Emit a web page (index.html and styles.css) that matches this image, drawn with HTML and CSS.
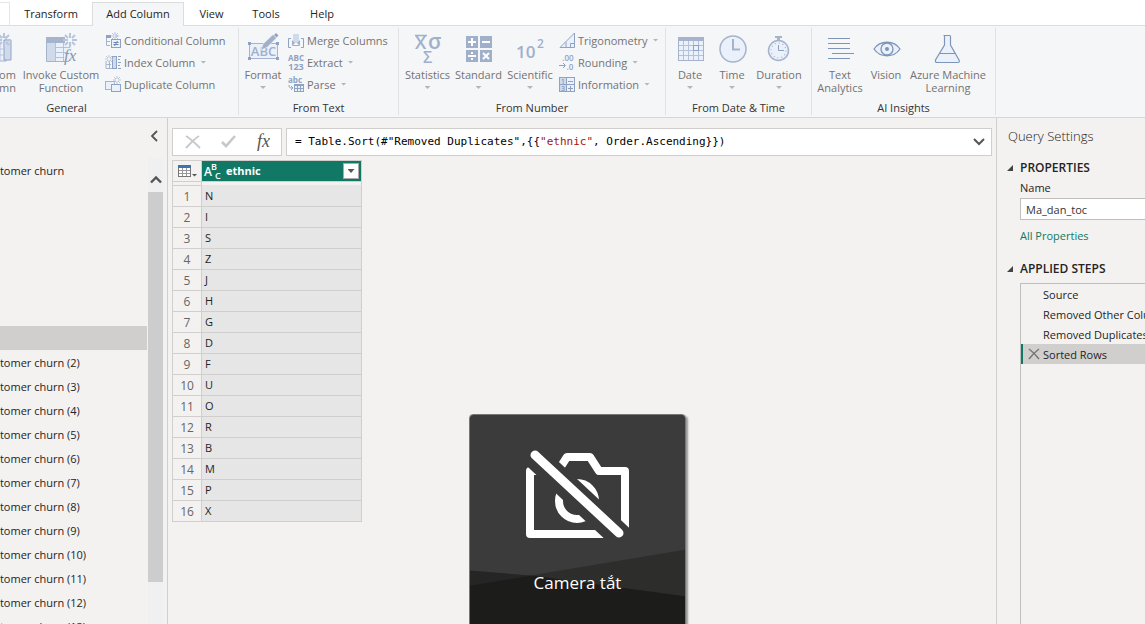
FILE: index.html
```html
<!DOCTYPE html>
<html lang="en">
<head>
<meta charset="utf-8">
<title>Power Query Editor</title>
<link rel="stylesheet" href="styles.css">
</head>
<body>
<svg class="defs" aria-hidden="true">
  <defs>
    <g id="burst" fill="none" stroke="#b9c5dc" stroke-width="2">
      <path d="M0-7V-2M0 7V2M-7 0H-2M7 0H2M-5-5L-2-2M5 5L2 2M-5 5L-2 2M5-5L2-2"/>
    </g>
    <g id="burst-s" fill="none" stroke="#b9c5dc" stroke-width="1">
      <path d="M0-4V-1M0 4V1M-4 0H-1M4 0H1M-3-3L-1-1M3 3L1 1M-3 3L-1 1M3-3L1-1"/>
    </g>
  </defs>
</svg>
<div class="app">
  <nav class="tabs">
    <button class="tab tab-file" aria-label="Home"></button>
    <button class="tab tab-transform">Transform</button>
    <button class="tab tab-active">Add Column</button>
    <button class="tab tab-view">View</button>
    <button class="tab tab-tools">Tools</button>
    <button class="tab tab-help">Help</button>
  </nav>

  <div class="ribbon">
    <section class="group group-general">
      <div class="tools">
        <button class="big w52">
          <svg class="icon" viewBox="0 0 40 34"><rect x="6" y="5" width="24" height="24" fill="#eaf1fb" stroke="#a6b3cc"/><path d="M6 5H24V10H6Z" fill="#a6b3cc"/><path d="M28 8H35V28H28Z" fill="#cfdbeb" stroke="#8fa2c3"/><path d="M20 5V29M24 10V29M10 17H28M10 23H28" stroke="#b9c5dc" fill="none"/><use href="#burst" x="28" y="8"/></svg>
          <span>Custom<br>Column</span>
        </button>
        <button class="big w78">
          <svg class="icon" viewBox="0 0 40 34"><path d="M5 5H24V11H5Z" fill="#a6b3cc"/><path d="M5.500 11V29.500H28" fill="none" stroke="#a6b3cc"/><path d="M6 11H14V29H6Z" fill="#cfdbeb"/><path d="M14 11H31V29H14Z" fill="#eaf1fb"/><path d="M14.500 11V29M22.500 11V29M15 15.500H29M15 20.500H25M15 25.500H23" stroke="#b3c1d9" fill="none"/><use href="#burst" x="29" y="8"/><text x="23" y="29" class="fx-big">fx</text></svg>
          <span>Invoke Custom<br>Function</span>
        </button>
        <div class="stack stack-general">
          <button class="small"><svg class="mini" viewBox="0 0 16 16"><path d="M1 3H6V6H1Z" fill="#8fa2c3"/><path d="M1.500 6V13.500H5M5 9.500H1M9.500 4H13" stroke="#a6b3cc" fill="none"/><use href="#burst-s" x="10" y="4"/><rect x="6.500" y="7.500" width="9" height="8" fill="#eaf1fb" stroke="#8fa2c3"/><path d="M8.500 10.500H13.500M8.500 12.500H13.500M12.500 9L9.500 14" stroke="#6f87b0" fill="none"/></svg>Conditional Column</button>
          <button class="small"><svg class="mini" viewBox="0 0 16 16"><path d="M1 7V14.500H8M1.500 10.500H6M4.500 7V14" stroke="#a6b3cc" fill="none"/><rect x="7.500" y="2.500" width="4" height="12" fill="#cfdbeb" stroke="#8fa2c3"/><use href="#burst-s" x="4" y="5"/><path d="M13 2.500H16M13 5.500H15M13 8.500H16M13 11.500H15M13 14.500H16" stroke="#8fa2c3"/></svg>Index Column<i class="caret"></i></button>
          <button class="small"><svg class="mini" viewBox="0 0 16 16"><rect x=".5" y="5.500" width="9" height="8" fill="#eaf1fb" stroke="#a6b3cc"/><rect x="6.500" y="8.500" width="9" height="7" fill="#eaf1fb" stroke="#8fa2c3"/><use href="#burst-s" x="12" y="4"/></svg>Duplicate Column</button>
        </div>
      </div>
      <h2>General</h2>
    </section>

    <section class="group group-text">
      <div class="tools">
        <button class="big w48">
          <svg class="icon" viewBox="0 0 40 34"><rect x="6.500" y="11.500" width="28" height="15" fill="#eaf1fb" stroke="#a6b3cc"/><path d="M5 10H8V13H5ZM33 10H36V13H33ZM5 25H8V28H5ZM33 25H36V28H33Z" fill="#8fa2c3"/><text x="20.500" y="23.500" class="abc-big">ABC</text><path d="M18 18L20 12L30 2.500L33.500 6L24 15.500Z" fill="#a0b0cb" stroke="#f5f6f8" stroke-width=".6"/><path d="M31 3L33 1L35.500 3.500L33.500 5.500Z" fill="#8fa2c3"/></svg>
          <span>Format</span><i class="caret"></i>
        </button>
        <div class="stack">
          <button class="small"><svg class="mini" viewBox="0 0 16 16"><path d="M3 6.500H.5V15.500H3M13 6.500H15.500V15.500H13" stroke="#8fa2c3" fill="none"/><path d="M5 2H11V11H5Z" fill="#cfdbeb"/><path d="M4 8V14L7 11ZM12 8V14L9 11Z" fill="#a0b0cb"/><path d="M4.500 13.500H11.500" stroke="#a0b0cb"/></svg>Merge Columns</button>
          <button class="small"><svg class="mini" viewBox="0 0 16 16"><text x="8" y="7" class="tiny">ABC</text><text x="8" y="16" class="tiny tiny-num">123</text></svg>Extract<i class="caret"></i></button>
          <button class="small"><svg class="mini" viewBox="0 0 16 16"><text x="7" y="7" class="tiny">abc</text><path d="M1 9C1 12 2 12 5 12M3 10L5 12L3 14" stroke="#8fa2c3" fill="none"/><rect x="6.500" y="8.500" width="9" height="7" fill="#eaf1fb" stroke="#8fa2c3"/><path d="M6 9.500H16M6 12.500H16M9.500 9V16M12.500 9V16" stroke="#8fa2c3"/></svg>Parse<i class="caret"></i></button>
        </div>
      </div>
      <h2>From Text</h2>
    </section>

    <section class="group group-number">
      <div class="tools">
        <button class="big w51"><svg class="icon" viewBox="0 0 40 34"><path d="M7 3.500H19" stroke="#a0b0cb" stroke-width="1.500"/><text x="7" y="17" class="stat">X</text><text x="20" y="17" class="stat stat-sigma">σ</text><text x="15" y="31" class="stat stat-sum">Σ</text></svg><span>Statistics</span><i class="caret"></i></button>
        <button class="big w51"><svg class="icon" viewBox="0 0 40 34"><path d="M7 4H19V16H7ZM21 4H33V16H21ZM7 18H19V30H7ZM21 18H33V30H21Z" fill="#a0b0cb"/><path d="M9 10H17M13 6V14M23 10H31M9 24H17M24 21L30 27M30 21L24 27" stroke="#fff" stroke-width="2"/><path d="M12 20H14V22H12ZM12 26H14V28H12Z" fill="#fff"/></svg><span>Standard</span><i class="caret"></i></button>
        <button class="big w52"><svg class="icon" viewBox="0 0 40 34"><text x="6" y="26" class="sci">10</text><text x="27" y="16" class="sci sci-exp">2</text></svg><span>Scientific</span><i class="caret"></i></button>
        <div class="stack stack-number">
          <button class="small"><svg class="mini" viewBox="0 0 16 16"><path d="M1 15.500H15.500V1Z" fill="#eaf1fb" stroke="#8fa2c3"/><path d="M7 15V10M11.500 15V11.500H15" stroke="#8fa2c3" fill="none"/></svg>Trigonometry<i class="caret"></i></button>
          <button class="small"><svg class="mini" viewBox="0 0 16 16"><text x="9" y="7" class="tiny tiny-reg">.00</text><text x="11" y="16" class="tiny tiny-reg">.0</text><path d="M0 11.500H6M4 9L6.500 11.500L4 14" stroke="#8fa2c3" fill="none"/></svg>Rounding<i class="caret"></i></button>
          <button class="small"><svg class="mini" viewBox="0 0 16 16"><rect x=".5" y="1.500" width="15" height="14" fill="#eaf1fb" stroke="#8fa2c3"/><path d="M1 2H7V15H1Z" fill="#cfdbeb"/><path d="M7.500 2V15M1 8.500H15M9 5.500H14M9 12.500H14M11.500 10V15" stroke="#8fa2c3"/><text x="4" y="8" class="digit">1</text><text x="4" y="15" class="digit">3</text></svg>Information<i class="caret"></i></button>
        </div>
      </div>
      <h2>From Number</h2>
    </section>

    <section class="group group-date">
      <div class="tools">
        <button class="big w42"><svg class="icon" viewBox="0 0 40 34"><rect x="8.500" y="5.500" width="25" height="23" fill="#eaf1fb" stroke="#a6b3cc"/><path d="M8 5H34V9H8Z" fill="#a6b3cc"/><path d="M13.500 9V28M18.500 9V28M23.500 9V28M28.500 9V28M9 13.500H33M9 18.500H33M9 23.500H33" stroke="#b3c1d9"/><rect x="23.500" y="13.500" width="5" height="5" fill="#eaf1fb" stroke="#8fa2c3"/></svg><span>Date</span><i class="caret"></i></button>
        <button class="big w42"><svg class="icon" viewBox="0 0 40 34"><circle cx="21" cy="17" r="13" fill="#eaf1fb" stroke="#a6b3cc" stroke-width="1.500"/><path d="M21 7V17.500H28" fill="none" stroke="#a6b3cc" stroke-width="2"/></svg><span>Time</span><i class="caret"></i></button>
        <button class="big w52"><svg class="icon" viewBox="0 0 40 34"><path d="M16 4H23V6H21V9H18V6H16Z" fill="#a6b3cc"/><circle cx="19.500" cy="18.500" r="10" fill="#eaf1fb" stroke="#a6b3cc" stroke-width="1.500"/><circle cx="19.500" cy="18.500" r="7.500" fill="none" stroke="#a6b3cc" stroke-width="1.200" stroke-dasharray="1 2.927"/><path d="M19.500 13V18.500H25" fill="none" stroke="#8fa2c3"/></svg><span>Duration</span><i class="caret"></i></button>
      </div>
      <h2>From Date &amp; Time</h2>
    </section>

    <section class="group group-ai">
      <div class="tools">
        <button class="big w52"><svg class="icon" viewBox="0 0 40 34"><path d="M8 6.500H30M8 11.500H30M8 16.500H30M12 21.500H34M8 26.500H30" stroke="#7e94b8"/></svg><span>Text<br>Analytics</span></button>
        <button class="big w40"><svg class="icon" viewBox="0 0 40 34"><path d="M8 17C14 8 28 8 34 17C28 26 14 26 8 17Z" fill="#eaf1fb" stroke="#7e94b8" stroke-width="1.300"/><circle cx="21" cy="17" r="6" fill="#eaf1fb" stroke="#7e94b8" stroke-width="1.300"/><circle cx="21" cy="17" r="2" fill="#7e94b8"/></svg><span>Vision</span></button>
        <button class="big w84"><svg class="icon" viewBox="0 0 40 34"><path d="M15.500 3.500H22.500M16.500 4V13L7.500 28Q7 30.500 9 30.500H30Q32 30.500 31 28L22.500 13V4" fill="#eaf1fb" stroke="#7e94b8" stroke-width="1.200"/><path d="M12 21.500H27" stroke="#7e94b8"/></svg><span>Azure Machine<br>Learning</span></button>
      </div>
      <h2>AI Insights</h2>
    </section>
  </div>

  <div class="workspace">
    <aside class="queries">
      <div class="queries-head">
        <button class="plain" aria-label="Collapse"><svg width="8" height="12" viewBox="0 0 8 12"><path d="M7 1L2 6L7 11" fill="none" stroke="#555" stroke-width="1.800"/></svg></button>
      </div>
      <div class="queries-body">
        <ul class="query-list">
          <li>Customer churn</li>
          <li></li><li></li><li></li><li></li><li></li><li></li>
          <li class="selected"></li>
          <li>Customer churn (2)</li>
          <li>Customer churn (3)</li>
          <li>Customer churn (4)</li>
          <li>Customer churn (5)</li>
          <li>Customer churn (6)</li>
          <li>Customer churn (7)</li>
          <li>Customer churn (8)</li>
          <li>Customer churn (9)</li>
          <li>Customer churn (10)</li>
          <li>Customer churn (11)</li>
          <li>Customer churn (12)</li>
          <li>Customer churn (13)</li>
        </ul>
        <div class="scrollbar">
          <button class="scroll-up" aria-label="Scroll up"><svg width="12" height="9" viewBox="0 0 12 9"><path d="M1 7.500L6 2.500L11 7.500" fill="none" stroke="#555" stroke-width="2.400"/></svg></button>
          <div class="thumb"></div>
        </div>
      </div>
    </aside>

    <main class="preview">
      <div class="formula-row">
        <div class="formula-tools">
          <button class="plain" aria-label="Cancel"><svg width="16" height="14" viewBox="0 0 16 14"><path d="M1 1C6 4 11 9 15 13M14 1C9 4 5 9 1 13" fill="none" stroke="#c8c8c8" stroke-width="2"/></svg></button>
          <button class="plain" aria-label="Commit"><svg width="16" height="14" viewBox="0 0 16 14"><path d="M1 7L5 11L14 1" fill="none" stroke="#c8c8c8" stroke-width="2.600"/></svg></button>
          <button class="plain fx">fx</button>
        </div>
        <div class="formula-box">
          <code>= Table.Sort(#"Removed Duplicates",{{<b>"ethnic"</b>, Order.Ascending}})</code>
          <button class="plain" aria-label="Expand formula"><svg width="12" height="8" viewBox="0 0 12 8"><path d="M1 1L6 6L11 1" fill="none" stroke="#555" stroke-width="2"/></svg></button>
        </div>
      </div>
      <table class="grid">
        <thead>
          <tr>
            <th class="corner"><button class="plain" aria-label="Table menu"><svg width="20" height="14" viewBox="0 0 20 14"><rect x="1.500" y="1.500" width="12" height="11" fill="#fff" stroke="#777"/><path d="M1 1H14V4H1Z" fill="#3b74b5"/><path d="M2 6.500H13M2 9.500H13M5.500 4V12M9.500 4V12" stroke="#999"/><path d="M15 10H20L17.500 12.500Z" fill="#555"/></svg></button></th>
            <th class="column-head">
              <div class="head-cell">
                <svg width="18" height="18" viewBox="0 0 18 18"><text x="0" y="14" class="type">A</text><text x="7" y="8" class="type type-s">B</text><text x="11" y="17" class="type type-s">C</text></svg>
                <span>ethnic</span>
                <button class="filter" aria-label="Filter ethnic"><i class="caret caret-dark"></i></button>
              </div>
            </th>
          </tr>
          <tr class="quality"><td></td><td></td></tr>
        </thead>
        <tbody>
          <tr><th>1</th><td>N</td></tr>
          <tr><th>2</th><td>I</td></tr>
          <tr><th>3</th><td>S</td></tr>
          <tr><th>4</th><td>Z</td></tr>
          <tr><th>5</th><td>J</td></tr>
          <tr><th>6</th><td>H</td></tr>
          <tr><th>7</th><td>G</td></tr>
          <tr><th>8</th><td>D</td></tr>
          <tr><th>9</th><td>F</td></tr>
          <tr><th>10</th><td>U</td></tr>
          <tr><th>11</th><td>O</td></tr>
          <tr><th>12</th><td>R</td></tr>
          <tr><th>13</th><td>B</td></tr>
          <tr><th>14</th><td>M</td></tr>
          <tr><th>15</th><td>P</td></tr>
          <tr><th>16</th><td>X</td></tr>
        </tbody>
      </table>
    </main>

    <aside class="settings">
      <h1>Query Settings</h1>
      <h3><svg width="6" height="6" viewBox="0 0 6 6"><path d="M6 0V6H0Z" fill="#444"/></svg>PROPERTIES</h3>
      <label for="query-name">Name</label>
      <input id="query-name" type="text" value="Ma_dan_toc">
      <a href="#">All Properties</a>
      <h3 class="steps-title"><svg width="6" height="6" viewBox="0 0 6 6"><path d="M6 0V6H0Z" fill="#444"/></svg>APPLIED STEPS</h3>
      <ol class="steps">
        <li>Source</li>
        <li>Removed Other Columns</li>
        <li>Removed Duplicates</li>
        <li class="current"><button class="plain" aria-label="Delete step"><svg width="12" height="10" viewBox="0 0 12 10"><path d="M1 0C5 3 8 6 11 10M11 0C7 3 4 6 1 10" fill="none" stroke="#777" stroke-width="1.500"/></svg></button>Sorted Rows</li>
      </ol>
    </aside>
  </div>

  <div class="camera">
    <svg class="camera-bg" viewBox="0 0 216 224" preserveAspectRatio="none"><path d="M0 0H216V224H0Z" fill="#3b3b3b"/><path d="M0 172L216 136V224H0Z" fill="#2d2d2b"/><path d="M0 157L62 162L0 172Z" fill="#252525"/><path d="M0 172L62 162L216 183V224H0Z" fill="#1c1c1a"/></svg>
    <svg class="camera-icon" width="106" height="90" viewBox="0 0 106 90"><g fill="none" stroke="#fff" stroke-width="8" stroke-linejoin="round"><path d="M5 21V84H100V21H74L65 7H42L33 21Z"/><circle cx="52" cy="51" r="18"/></g><path d="M52 33A18 18 0 0 1 70 51Z" fill="#fff"/><path d="M4 1L100 91" stroke="#3b3b3b" stroke-width="25"/><path d="M10 5L94 83" stroke="#fff" stroke-width="9" stroke-linecap="round"/></svg>
    <p>Camera tắt</p>
  </div>
</div>
</body>
</html>
```
FILE: styles.css
```css
* { box-sizing: border-box; }
html, body { height: 100%; }
body {
  margin: 0;
  overflow: hidden;
  font: 11px/13px "Open Sans", "Noto Sans", sans-serif;
  color: #252423;
  background: #f3f2f1;
}
button {
  font: inherit;
  color: inherit;
  background: none;
  border: 0;
  padding: 0;
  white-space: nowrap;
}
h1, h2, h3, p, ul, ol { margin: 0; padding: 0; }
ul, ol { list-style: none; }
svg { display: block; flex: none; overflow: visible; }
.defs { position: absolute; width: 0; height: 0; }
.app { height: 100vh; display: flex; flex-direction: column; position: relative; overflow: hidden; }

/* tab strip */
.tabs { display: flex; background: #fff; height: 26px; padding-top: 2px; border-bottom: 1px solid #dcdddf; }
.tab { height: 23px; color: #252423; }
.tab-file { width: 10px; border: 1px solid #e6e6e6; border-left: 0; border-bottom: 0; }
.tab-transform { width: 82px; }
.tab-active { width: 92px; height: 24px; padding-bottom: 2px; background: #f5f6f8; border: 1px solid #dcdddf; border-bottom: 0; }
.tab-view { width: 55px; }
.tab-tools { width: 54px; }
.tab-help { width: 58px; }

/* ribbon */
.ribbon { display: flex; height: 92px; flex: none; background: #f5f6f8; border-bottom: 1px solid #d6d6d6; color: #737373; }
.group { display: flex; flex-direction: column; flex: none; margin: 2px 0; border-right: 1px solid #e0e1e3; }
.group h2 { font: inherit; color: #333; text-align: center; padding-top: 5px; }
.group-general { width: 343px; margin-left: -104px; }
.group-text { width: 160px; }
.group-number { width: 267px; }
.group-date { width: 146px; }
.group-ai { width: 184px; }
.group-general .tools { justify-content: flex-end; }
.group-general h2 { padding-right: 1px; }
.group-number .tools, .group-date .tools { padding-left: 3px; }
.group-ai .tools { padding-left: 2px; }
.tools { display: flex; height: 68px; }
.big { display: flex; flex-direction: column; align-items: center; padding-top: 4px; flex: none; }
.big span { padding-top: 2px; }
.big .caret { margin: 5px 0 0; }
.icon { width: 40px; height: 34px; }
.w40 { width: 40px; } .w42 { width: 42px; } .w48 { width: 48px; } .w51 { width: 51px; }
.w52 { width: 52px; } .w78 { width: 78px; } .w84 { width: 84px; }
.stack { display: flex; flex-direction: column; align-items: flex-start; padding: 1px 0 0 1px; }
.stack-general { width: 138px; padding-left: 5px; }
.stack-number { padding-left: 3px; }
.small { display: flex; align-items: center; gap: 3px; height: 22px; }
.mini { width: 16px; height: 16px; }
.caret { width: 6px; height: 3px; margin-left: 2px; background: #b3b5b9; clip-path: polygon(0 0, 100% 0, 50% 100%); flex: none; }
.caret-dark { margin: 0; width: 7px; height: 4px; background: #555; }
.fx-big { font: italic 17px "Liberation Serif", serif; fill: #8795b0; }
.abc-big { font: 600 13px "Open Sans", sans-serif; fill: #a0b0cb; text-anchor: middle; }
.tiny { font: bold 8px "Open Sans", sans-serif; fill: #8fa2c3; text-anchor: middle; }
.tiny-num { font-size: 9px; }
.tiny-reg { font-weight: 600; }
.digit { font: 7px "Open Sans", sans-serif; fill: #6f87b0; text-anchor: middle; }
.stat { font: 600 18px "Open Sans", sans-serif; fill: #a0b0cb; }
.stat-sigma { font-size: 21px; }
.stat-sum { font-size: 16px; }
.sci { font: 600 17px "Open Sans", sans-serif; fill: #a0b0cb; }
.sci-exp { font-size: 12px; }

/* workspace */
.workspace { display: flex; flex: 1; min-height: 0; }
.queries { width: 168px; flex: none; display: flex; flex-direction: column; border-right: 1px solid #d0cfce; }
.queries-head { display: flex; justify-content: flex-end; padding: 12px 9px 0 0; height: 40px; flex: none; }
.plain { display: flex; align-items: center; justify-content: center; }
.queries-head .plain { height: 12px; }
.queries-body { display: flex; flex: 1; min-height: 0; gap: 1px; padding-right: 4px; }
.query-list { flex: 1; min-width: 0; overflow: hidden; line-height: 26px; }
.query-list li { height: 24px; white-space: nowrap; text-indent: -19px; }
.query-list .selected { background: #d0cfce; }
.scrollbar { width: 15px; background: #f0f0f0; display: flex; flex-direction: column; }
.scroll-up { height: 34px; flex: none; display: flex; justify-content: center; align-items: center; padding-top: 9px; }
.thumb { height: 90%; max-height: 390px; background: #cdcdcd; }

.preview { flex: 1; min-width: 0; padding: 10px 4px; }
.formula-row { display: flex; gap: 4px; height: 28px; }
.formula-tools { width: 110px; display: flex; align-items: center; justify-content: space-between; padding: 0 11px 0 12px; background: #fff; border: 1px solid #d0cfce; }
.fx { font: italic 18px/20px "Liberation Serif", serif; color: #555; }
.formula-tools .fx { height: 24px; padding-bottom: 2px; }
.formula-box { flex: 1; min-width: 0; display: flex; align-items: center; justify-content: space-between; padding: 0 6px 0 8px; background: #fff; border: 1px solid #d0cfce; }
.formula-box code { font: 11px/14px "DejaVu Sans Mono", monospace; color: #000; white-space: pre; }
.formula-box b { font-weight: normal; color: #a31515; }

.grid { width: 190px; margin-top: 4px; table-layout: fixed; border-collapse: separate; border-spacing: 0; border: 1px solid #d0cfce; border-bottom: 0; }
.grid th, .grid td { padding: 0; height: 21px; border-bottom: 1px solid #d0cfce; font-weight: normal; }
.grid tr > :first-child { width: 29px; border-right: 1px solid #d0cfce; color: #666; font-size: 12px; text-align: center; }
.grid tbody td { background: #e6e6e6; padding: 0 3px 2px; }
.grid .corner .plain { width: 28px; height: 20px; }
.grid .quality td { height: 4px; }
.grid .quality td:last-child { border-bottom-color: #e6e6e6; }
.grid .column-head { background: #117865; color: #fff; font-weight: bold; }
.head-cell { display: flex; align-items: center; gap: 4px; height: 20px; padding: 0 2px; }
.head-cell span { flex: 1; text-align: left; padding-bottom: 2px; }
.filter { width: 16px; height: 16px; display: flex; align-items: center; justify-content: center; background: #fff; border: 1px solid #aaa; }
.type { font: 600 12px "Open Sans", sans-serif; fill: #fff; }
.type-s { font-size: 9px; }

.settings { width: 149px; flex: none; display: flex; flex-direction: column; padding: 9px 0 0 23px; border-left: 1px solid #d0cfce; overflow: hidden; white-space: nowrap; line-height: 16px; }
.settings h1 { font: 300 13px/18px "Open Sans", sans-serif; color: #252423; margin-left: -12px; }
.settings h3 { display: flex; align-items: center; gap: 7px; margin: 15px 0 4px -13px; font: 600 12px/16px "Open Sans", sans-serif; }
.settings input { width: 180px; height: 22px; margin-top: 2px; padding: 0 5px; border: 1px solid #c0bfbe; border-radius: 0; background: #fff; font: 11px "Open Sans", sans-serif; color: #333; }
.settings a { margin-top: 8px; color: #117865; text-decoration: none; }
.settings .steps-title { margin-top: 17px; margin-bottom: 6px; }
.steps { width: 180px; flex: 1; border: 1px solid #c0bfbe; border-bottom: 0; line-height: 22px; }
.steps li { height: 20px; padding-left: 22px; }
.steps .current { display: flex; padding-left: 4px; gap: 3px; background: #d0cfce; border-left: 2px solid #117865; }
.steps .plain { width: 13px; height: 20px; }

/* floating video tile */
.camera { position: absolute; left: 469px; top: 414px; width: 217px; bottom: -14px; border: 1px solid #777; border-radius: 4px; overflow: hidden; box-shadow: 2px 2px 2px #999; color: #fff; display: flex; flex-direction: column; align-items: center; padding-top: 35px; }
.camera-bg { position: absolute; inset: 0; width: 100%; height: 100%; }
.camera-icon { position: relative; }
.camera p { position: relative; margin-top: 31px; font-size: 17px; line-height: 24px; }
```
